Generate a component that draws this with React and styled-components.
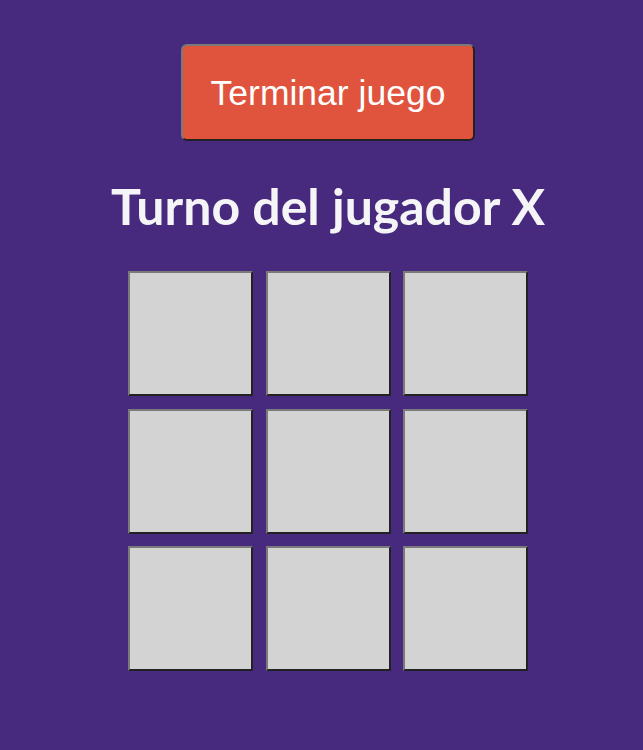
import React, { useState } from "react"
import styled, { createGlobalStyle } from "styled-components"

const GlobalStyle = createGlobalStyle`
  html, body {
    margin: 0;
    padding: 0;
    background-color: #47297d;
  }
`

const Page = styled.div`
  min-height: 750px;
  box-sizing: border-box;
  padding: 44px 0 0 13px;
  display: flex;
  flex-direction: column;
  align-items: center;
  background-color: #47297d;
`

const EndButton = styled.button`
  font-family: "Liberation Sans", Arial, sans-serif;
  font-size: 35.5px;
  line-height: 40px;
  color: #ffffff;
  background-color: #e0533c;
  padding: 27px 28px 26px;
  border: 2px solid;
  border-color: #7a7a7a #222222 #222222 #7a7a7a;
  border-radius: 6px;
  cursor: pointer;
`

const Title = styled.h1`
  font-family: "Lato", "Noto Sans", sans-serif;
  font-weight: 700;
  font-size: 50px;
  line-height: 58px;
  color: #f5f5f7;
  margin: 36px 0 36px;
`

const Board = styled.div`
  display: grid;
  grid-template-columns: repeat(3, 125px);
  grid-auto-rows: 125px;
  gap: 12.5px;
`

const Cell = styled.button`
  box-sizing: border-box;
  width: 125px;
  height: 125px;
  background-color: #d3d3d3;
  border: 2px solid;
  border-color: #7a7a7a #222222 #222222 #7a7a7a;
  padding: 0;
  font-family: "Liberation Sans", Arial, sans-serif;
  font-size: 64px;
  cursor: pointer;
`

const App = () => {
  const [cells, setCells] = useState(Array(9).fill(null))
  const [player, setPlayer] = useState("X")

  const play = (i) => {
    if (cells[i]) return
    const next = cells.slice()
    next[i] = player
    setCells(next)
    setPlayer(player === "X" ? "O" : "X")
  }

  const reset = () => {
    setCells(Array(9).fill(null))
    setPlayer("X")
  }

  return (
    <Page>
      <GlobalStyle />
      <EndButton onClick={reset}>Terminar juego</EndButton>
      <Title>Turno del jugador {player}</Title>
      <Board>
        {cells.map((c, i) => (
          <Cell key={i} onClick={() => play(i)}>
            {c}
          </Cell>
        ))}
      </Board>
    </Page>
  )
}

export default App
